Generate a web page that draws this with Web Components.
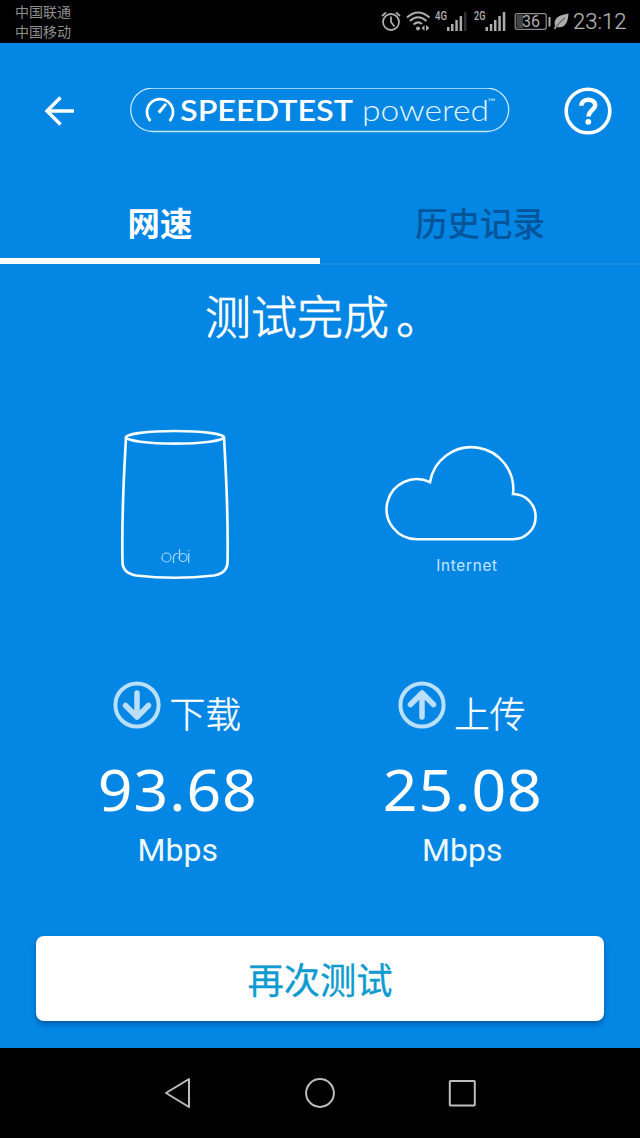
<!DOCTYPE html>
<html lang="zh-CN">
<head>
<meta charset="utf-8">
<title>Speedtest</title>
<style>
html,body{margin:0;height:1138px;overflow:hidden;background:#000}
body{font-family:Roboto,"Noto Sans CJK SC",sans-serif;color:#fff}
</style>
</head>
<body>
<speed-app></speed-app>
<script>
function define(name, html) {
  const t = document.createElement('template');
  t.innerHTML = html;
  customElements.define(name, class extends HTMLElement {
    constructor() {
      super();
      this.attachShadow({mode: 'open'}).appendChild(t.content.cloneNode(true));
    }
  });
}

define('status-bar', `
<style>
:host{display:flex;height:43px;background:#000;color:#a3a3a3;box-sizing:border-box;padding:0 14px 0 15px;justify-content:space-between;align-items:flex-start}
.carriers{font:14px/19.5px "Noto Sans CJK SC",sans-serif;color:#8e8e8e;padding-top:2px}
.right{display:flex;align-items:center;gap:3px;height:43px}
.time{font:300 22px/44px Roboto,sans-serif;width:53px;white-space:nowrap;color:#b4b4b4;-webkit-text-stroke:.2px #b4b4b4}
svg{display:block}
</style>
<div class="carriers"><div>中国联通</div><div>中国移动</div></div>
<div class="right">
<svg width="190" height="43" viewBox="380 0 190 43" fill="none" stroke="#acacac" stroke-width="1.800">
<circle cx="391" cy="22" r="8"/><path d="M391 16.500V22l3.500 4.500M382 16l4-3.500M400 16l-4-3.500"/>
<path d="M407 17.500Q418 7.500 429.500 17.500M410 21Q418 13.500 426.500 21M413.500 24.500Q418 20.500 422 24" stroke-width="2.100"/>
<g fill="#acacac" stroke="none"><circle cx="418" cy="28.500" r="2"/><path d="M424.500 25v6l-3-3zM426 25v6l3.500-3z"/>
<path d="M447 27h2.500v4H447zM451 24h2.500v7H451zM455.300 20h2.500v11h-2.500zM459.600 16h2.500v15h-2.500z"/>
<path fill="#303030" d="M464 12h2.500v19H464z"/>
<path d="M485.500 27h2.500v4h-2.500zM489.800 24h2.500v7h-2.500zM494 20h2.500v11H494zM498.300 16h2.500v15h-2.500zM502.800 12h2.500v19h-2.500z"/>
<path fill="#444" d="M516.500 15h6.500v13h-6.500z"/>
<rect x="548.500" y="17" width="2" height="9.500"/>
<path d="M555 26C553 18 559 15 568.500 13.500C568 24 564 28.500 557 27L555 29.500L554 28.500Z"/></g>
<path d="M556 27q3.500-5 9-9" stroke="#000" stroke-width=".6"/>
<rect x="515.200" y="13.700" width="31" height="15.600" rx="2" stroke-width="1.200" stroke="#8e8e8e"/>
<g stroke="none" fill="#b0b0b0" font-family="Roboto,sans-serif"><text x="435" y="20" font-size="12" font-weight="500" textLength="12" lengthAdjust="spacingAndGlyphs">4G</text><text x="474" y="20" font-size="12" font-weight="500" textLength="11.500" lengthAdjust="spacingAndGlyphs">2G</text><text x="522" y="27.300" font-size="16" textLength="18" lengthAdjust="spacingAndGlyphs">36</text></g>
</svg>
<span class="time">23:12</span></div>`);

define('speed-logo', `
<style>:host{display:block}svg{display:block}</style>
<svg width="380" height="46" viewBox="130 87.500 380 46">
<rect x="130.700" y="87.700" width="378" height="43.300" rx="21.650" fill="none" stroke="#c9eaff" stroke-width="1.300"/>
<path d="M150.500 120.500A13 13 0 1 1 169.500 120.500" fill="none" stroke="#fff" stroke-width="2.700"/>
<path d="M157.500 111L165 102.500L167 104.300L160 113.300Z" fill="#fff"/>
<g fill="#fff" font-family="Lato,sans-serif"><text x="180" y="120.300" font-size="29.500" font-weight="600" textLength="173" lengthAdjust="spacingAndGlyphs">SPEEDTEST</text>
<text x="362" y="120.300" font-size="29.500" font-weight="300" textLength="127" lengthAdjust="spacingAndGlyphs" fill="#e2f5ff">powered</text>
<text x="487.500" y="104" font-size="9" textLength="8" lengthAdjust="spacingAndGlyphs" fill="#d8f1ff">™</text></g>
</svg>`);

define('app-header', `
<style>
:host{display:flex;align-items:center;justify-content:space-between;height:135px;padding:0 28px 0 44px}
svg{display:block}
</style>
<svg width="32" height="32" viewBox="0 0 32 32" fill="none" stroke="#fff" stroke-width="3.400"><path d="M30 16H3M16.500 2.500L3 16L16.500 29.500"/></svg>
<speed-logo></speed-logo>
<svg width="48" height="48" viewBox="0 0 48 48"><circle cx="24" cy="24" r="21.800" fill="none" stroke="#fff" stroke-width="3.600"/><path d="M17.300 18.700C17.500 10.700 31.200 11 31.200 18.200C31.200 22.500 24.500 23.500 24.500 29.500" fill="none" stroke="#fff" stroke-width="4.400"/><circle cx="24.300" cy="34.800" r="2.900" fill="#fff"/></svg>`);

define('app-tab', `
<style>
:host{display:block;flex:1;height:87px;box-sizing:border-box;text-align:center;font:500 32.400px/88px "Noto Sans CJK SC",sans-serif;color:#04559a;border-bottom:2px solid #188cdd}
:host([selected]){height:86px;color:#fff;font-weight:700;border-bottom:6px solid #fff}
</style><slot></slot>`);

define('app-tabs', `<style>:host{display:flex;height:87px}</style><slot></slot>`);

define('orbi-router', `
<style>:host{display:block}svg{display:block}</style>
<svg width="150" height="190" viewBox="100 410 150 190" fill="none" stroke="#f4fcff" stroke-width="2.700">
<ellipse cx="175" cy="437.300" rx="49" ry="6.300"/>
<path d="M126 437.500C124 475 121.500 510 122.500 562Q122.500 573 136 575.500Q175 580 214 575.500Q227.500 573 227.500 562C228.500 510 226 475 224 437.500"/>
<g stroke="#a6dbff" stroke-width="1.200"><circle cx="166.500" cy="557.500" r="4.500"/><path d="M173.500 563V558Q173.500 553.500 178 553.500M179.500 549V558"/><circle cx="183" cy="557.500" r="4"/><path d="M188.700 553V563M188.700 550V551.200"/></g>
</svg>`);

define('net-cloud', `
<style>:host{display:block;text-align:center}svg{display:block}
div{font:400 15.200px/20px Inter,sans-serif;letter-spacing:.75px;color:#c5e8ff;margin-top:12px;padding-left:10px}</style>
<svg width="160" height="100" viewBox="382 444 160 100" fill="none" stroke="#f4fcff" stroke-width="2.600"><path d="M416.500 539.300A30.100 30.100 0 1 1 430 482.200A41.930 41.930 0 0 1 513 494A22.650 22.650 0 0 1 513 539.300Z"/></svg>
<div>Internet</div>`);

define('speed-stat', `
<style>
:host{display:block;flex:1;text-align:center}
.head{display:flex;justify-content:center;gap:8px;height:60px}
.label{font:300 35.800px/50px "Noto Sans CJK SC",sans-serif;-webkit-text-stroke:.4px #fff;padding-top:5.500px}
.value{font:400 56.500px/70px "Noto Sans",sans-serif;letter-spacing:.9px;padding-left:1px;margin-top:14px;transform:scaleX(1.075)}
.unit{font:400 32px/40px Roboto,sans-serif;margin-top:5px;color:#eefaff;padding-left:1px}
</style>
<div class="head"><slot name="icon"></slot><div class="label"><slot name="label"></slot></div></div>
<div class="value"><slot></slot></div>
<div class="unit">Mbps</div>`);

for (const [name, d] of [['icon-down', 'M24 12V35M12.500 24.500L24 36L35.500 24.500'], ['icon-up', 'M24 36V13M12.500 23.500L24 12L35.500 23.500']]) {
  define(name, `<style>:host{display:block;width:48px;height:48px}svg{display:block}</style>
<svg width="48" height="48" viewBox="0 0 48 48" fill="none" stroke="#b9dffb" stroke-width="4"><circle cx="24" cy="24" r="21.600"/><path d="${d}" stroke-width="5.500" stroke-linecap="round" stroke-linejoin="round"/></svg>`);
}

define('retry-button', `
<style>
:host{display:block}
button{display:block;width:100%;height:85px;border:0;border-radius:8px;background:#fff;color:#0f9bd0;font:400 36.300px/85px "Noto Sans CJK SC",sans-serif;-webkit-text-stroke:.3px #0f9bd0;padding:0 0 1px;box-shadow:0 3px 5px rgba(0,40,90,.45)}
</style><button><slot></slot></button>`);

define('nav-bar', `
<style>:host{display:flex;height:90px;background:#000;justify-content:center;align-items:center}svg{display:block}</style>
<svg width="320" height="36" viewBox="160 1075 320 36" fill="none" stroke="#bdbdbd" stroke-width="2" stroke-linejoin="round"><path d="M189 1079V1107L166 1093Z"/><circle cx="320" cy="1093" r="13.900"/><rect x="449.800" y="1081" width="25" height="24.500" rx=".8"/></svg>`);

define('speed-app', `
<style>
:host{display:flex;flex-direction:column;width:640px;height:1138px}
main{height:1005px;background:#0386e4;display:flex;flex-direction:column}
h1{margin:0;height:102px;font:300 46px/99px "Noto Sans CJK SC",sans-serif;-webkit-text-stroke:.7px #fff;text-align:center}
h1 span{margin:0 -7px 0 7px}
.figures,.stats{display:flex;padding:0 36px}
.figures{height:190px;margin-top:43px}
.figures orbi-router{width:150px;margin-left:64px;margin-right:70px}
.figures net-cloud{width:160px;margin-left:62px;padding-top:34px}
.stats{margin-top:81px;height:255px;padding-left:35px}
retry-button{margin:0 36px}
</style>
<status-bar></status-bar>
<main>
<app-header></app-header>
<app-tabs><app-tab selected>网速</app-tab><app-tab>历史记录</app-tab></app-tabs>
<h1>测试完成<span>。</span></h1>
<div class="figures"><orbi-router></orbi-router><net-cloud></net-cloud></div>
<div class="stats">
<speed-stat><icon-down slot="icon"></icon-down><span slot="label">下载</span>93.68</speed-stat>
<speed-stat><icon-up slot="icon"></icon-up><span slot="label">上传</span>25.08</speed-stat>
</div>
<retry-button>再次测试</retry-button>
</main>
<nav-bar></nav-bar>`);
</script>
</body>
</html>
